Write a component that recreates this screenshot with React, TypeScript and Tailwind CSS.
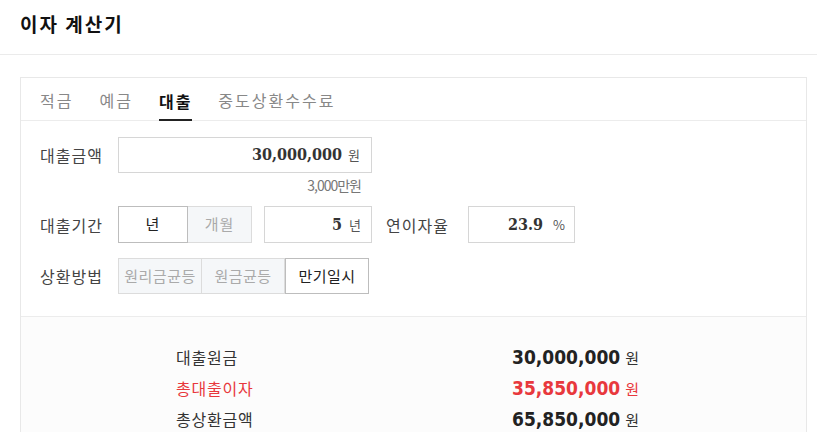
import React from "react";

const KR = "font-['Noto_Sans_CJK_KR','Noto_Sans',sans-serif]";
const SERIF = "font-['DejaVu_Serif_Condensed','DejaVu_Serif',serif] font-stretch-condensed font-bold";
const COND = "font-['DejaVu_Sans_Condensed','DejaVu_Sans',sans-serif] font-bold";

export default function App() {
  return (
    <div className={`w-[817px] h-[432px] overflow-hidden bg-white ${KR} text-[#333]`}>
      <div className="h-[55px] flex items-center px-5 border-b border-[#ebebeb]">
        <h1 className="text-[19px] tracking-[2px] font-bold text-[#111] leading-none -mt-[8px]">이자 계산기</h1>
      </div>
      <div className="pt-[22px] pl-5 pr-[10px]">
        <div className="border border-[#e8e8e8]">
          <div className="h-[43px] flex items-end gap-[26px] px-[19px] border-b border-[#ececec]">
            <div className="text-[16px] tracking-[2px] text-[#888] pb-[8px]">적금</div>
            <div className="text-[16px] tracking-[2px] text-[#888] pb-[8px]">예금</div>
            <div className="text-[16px] tracking-[2px] text-[#111] font-bold pb-[6px] border-b-2 border-[#222] -mb-px">대출</div>
            <div className="text-[16px] tracking-[2px] text-[#888] pb-[8px]">중도상환수수료</div>
          </div>
          <div className="pl-[19px] pt-[16px] pb-[22px]">
            <div className="flex items-center">
              <div className="w-[78px] text-[16px] tracking-[1px] text-[#444]">대출금액</div>
              <div className="w-[254px] h-[36px] border border-[#d6d6d6] flex items-center justify-end pr-[11px]">
                <span className={`${SERIF} text-[16px] text-[#333]`}>30,000,000</span>
                <span className="text-[13px] text-[#555] ml-[6px]">원</span>
              </div>
            </div>
            <div className="w-[332px] text-right pr-[11px] text-[14px] text-[#777] tracking-[-1px] mt-[4px] leading-[17px]">3,000만원</div>
            <div className="flex items-center mt-[12px]">
              <div className="w-[78px] text-[16px] tracking-[1px] text-[#444]">대출기간</div>
              <div className="w-[70px] h-[37px] border border-[#bdbdbd] bg-white flex items-center justify-center text-[15px] tracking-[1px] text-[#222]">년</div>
              <div className="w-[64px] h-[37px] border border-l-0 border-[#dcdcdc] bg-[#f5f7f9] flex items-center justify-center text-[15px] tracking-[1px] text-[#aaa]">개월</div>
              <div className="ml-[12px] w-[108px] h-[37px] border border-[#d6d6d6] flex items-center justify-end pr-[10px]">
                <span className={`${SERIF} text-[16px] text-[#333]`}>5</span>
                <span className="text-[13px] text-[#555] ml-[7px]">년</span>
              </div>
              <div className="ml-[14px] w-[82px] text-[16px] tracking-[1px] text-[#444]">연이자율</div>
              <div className="w-[107px] h-[37px] border border-[#d6d6d6] flex items-center justify-end pr-[9px]">
                <span className={`${SERIF} text-[16px] text-[#333]`}>23.9</span>
                <span className="text-[13px] text-[#555] ml-[10px]">%</span>
              </div>
            </div>
            <div className="flex items-center mt-[15px]">
              <div className="w-[78px] text-[16px] tracking-[1px] text-[#444]">상환방법</div>
              <div className="w-[84px] h-[36px] border border-[#dcdcdc] bg-[#f5f7f9] flex items-center justify-center text-[15px] tracking-[0.5px] text-[#aaa]">원리금균등</div>
              <div className="w-[83px] h-[36px] border border-l-0 border-[#dcdcdc] bg-[#f5f7f9] flex items-center justify-center text-[15px] tracking-[0.5px] text-[#aaa]">원금균등</div>
              <div className="w-[84px] h-[36px] border border-[#bdbdbd] bg-white flex items-center justify-center text-[15px] tracking-[0.5px] text-[#222]">만기일시</div>
            </div>
          </div>
          <div className="border-t border-[#ececec] bg-[#fcfcfc] pt-[29px] pb-[20px]">
            <div className="ml-[155px] w-[463px] flex flex-col gap-[9px]">
              <div className="flex items-center justify-between h-[22px]">
                <span className="text-[16px] tracking-[0.8px] text-[#333]">대출원금</span>
                <span className="flex items-baseline">
                  <span className={`${COND} text-[19px] text-[#222]`}>30,000,000</span>
                  <span className="text-[15px] text-[#333] ml-[5px]">원</span>
                </span>
              </div>
              <div className="flex items-center justify-between h-[22px]">
                <span className="text-[16px] tracking-[0.8px] text-[#e8383d]">총대출이자</span>
                <span className="flex items-baseline">
                  <span className={`${COND} text-[19px] text-[#e8383d]`}>35,850,000</span>
                  <span className="text-[15px] text-[#e8383d] ml-[5px]">원</span>
                </span>
              </div>
              <div className="flex items-center justify-between h-[22px]">
                <span className="text-[16px] tracking-[0.8px] text-[#333]">총상환금액</span>
                <span className="flex items-baseline">
                  <span className={`${COND} text-[19px] text-[#222]`}>65,850,000</span>
                  <span className="text-[15px] text-[#333] ml-[5px]">원</span>
                </span>
              </div>
            </div>
          </div>
        </div>
      </div>
    </div>
  );
}
